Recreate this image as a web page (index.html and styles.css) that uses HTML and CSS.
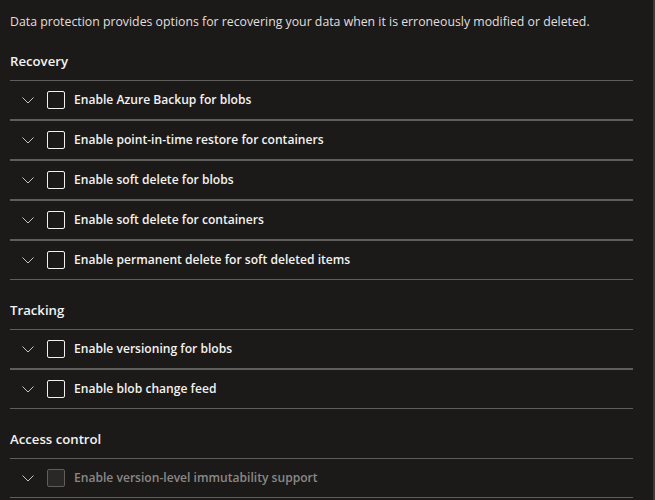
FILE: index.html
```html
<!DOCTYPE html>
<html lang="en">
<head>
  <meta charset="UTF-8" />
  <title>Data protection</title>
  <link rel="stylesheet" href="styles.css">
</head>
<body>
  <div class="page">
    <p class="intro">Data protection provides options for recovering your data when it is erroneously modified or deleted.</p>

    <div class="section">
      <h3 class="section-title">Recovery</h3>
      <div class="item">
        <svg class="chevron" width="12" height="7" viewBox="0 0 12 7"><polyline points="0.5,0.5 6,6 11.5,0.5" /></svg>
        <span class="box"></span>
        <span class="label">Enable Azure Backup for blobs</span>
      </div>
      <div class="item">
        <svg class="chevron" width="12" height="7" viewBox="0 0 12 7"><polyline points="0.5,0.5 6,6 11.5,0.5" /></svg>
        <span class="box"></span>
        <span class="label">Enable point-in-time restore for containers</span>
      </div>
      <div class="item">
        <svg class="chevron" width="12" height="7" viewBox="0 0 12 7"><polyline points="0.5,0.5 6,6 11.5,0.5" /></svg>
        <span class="box"></span>
        <span class="label">Enable soft delete for blobs</span>
      </div>
      <div class="item">
        <svg class="chevron" width="12" height="7" viewBox="0 0 12 7"><polyline points="0.5,0.5 6,6 11.5,0.5" /></svg>
        <span class="box"></span>
        <span class="label">Enable soft delete for containers</span>
      </div>
      <div class="item">
        <svg class="chevron" width="12" height="7" viewBox="0 0 12 7"><polyline points="0.5,0.5 6,6 11.5,0.5" /></svg>
        <span class="box"></span>
        <span class="label">Enable permanent delete for soft deleted items</span>
      </div>
    </div>

    <div class="section">
      <h3 class="section-title">Tracking</h3>
      <div class="item">
        <svg class="chevron" width="12" height="7" viewBox="0 0 12 7"><polyline points="0.5,0.5 6,6 11.5,0.5" /></svg>
        <span class="box"></span>
        <span class="label">Enable versioning for blobs</span>
      </div>
      <div class="item">
        <svg class="chevron" width="12" height="7" viewBox="0 0 12 7"><polyline points="0.5,0.5 6,6 11.5,0.5" /></svg>
        <span class="box"></span>
        <span class="label">Enable blob change feed</span>
      </div>
    </div>

    <div class="section">
      <h3 class="section-title">Access control</h3>
      <div class="item disabled">
        <svg class="chevron" width="12" height="7" viewBox="0 0 12 7"><polyline points="0.5,0.5 6,6 11.5,0.5" /></svg>
        <span class="box"></span>
        <span class="label">Enable version-level immutability support</span>
      </div>
    </div>
  </div>
</body>
</html>
```

FILE: styles.css
```css
html, body {
  margin: 0;
  padding: 0;
  height: 100%;
  overflow: hidden;
  background: #1b1a19;
  font-family: "Open Sans", "Noto Sans", sans-serif;
  color: #f3f2f1;
}

.page {
  height: 100%;
  padding: 0 20px 0 10px;
  border-right: 2px solid #3b3a39;
  box-sizing: border-box;
  width: 655px;
}

.intro {
  margin: 0;
  padding-top: 12px;
  font-size: 12.3px;
  line-height: 19px;
  color: #e1dfdd;
}

.section {
  padding-top: 20px;
}

.section-title {
  margin: 0 0 9px;
  font-size: 13.2px;
  line-height: 20px;
  font-weight: 600;
}

.item {
  display: flex;
  align-items: center;
  height: 38px;
  border-top: 1px solid #605e5c;
  border-bottom: 1px solid #605e5c;
}

.chevron {
  margin-left: 12px;
  fill: none;
  stroke: #c8c6c4;
  stroke-width: 1;
}

.box {
  width: 16px;
  height: 16px;
  margin-left: 13px;
  margin-right: 9px;
  border: 1px solid #f3f2f1;
  border-radius: 2px;
}

.label {
  font-size: 12.1px;
  line-height: 16px;
  padding-bottom: 1px;
  font-weight: 600;
}

.disabled .box {
  border-color: #605e5c;
  background: #292827;
}

.disabled .label {
  color: #8a8886;
}
```
